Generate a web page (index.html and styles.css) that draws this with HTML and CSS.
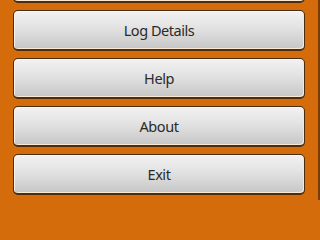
FILE: index.html
```html
<!DOCTYPE html>
<html>
<head>
<meta charset="utf-8">
<link rel="stylesheet" href="styles.css">
</head>
<body>
<div class="screen">
  <div class="menu">
    <button class="btn" aria-hidden="true"></button>
    <button class="btn">Log Details</button>
    <button class="btn">Help</button>
    <button class="btn">About</button>
    <button class="btn">Exit</button>
  </div>
</div>
</body>
</html>
```
FILE: styles.css
```css
html, body {
  margin: 0;
  padding: 0;
  width: 320px;
  height: 200px;
  overflow: hidden;
  background: #d56c0c;
}
.screen {
  width: 320px;
  height: 200px;
  box-sizing: border-box;
  border-right: 2px solid #7a3c06;
  overflow: hidden;
}
.menu {
  display: flex;
  flex-direction: column;
  gap: 7px;
  margin-top: -38px;
  padding: 0 13px 0 13px;
}
.btn {
  height: 41px;
  width: 292px;
  box-sizing: border-box;
  border: 1px solid #4a2c10;
  border-bottom-width: 2px;
  border-radius: 5px;
  background: linear-gradient(to bottom, #f2f2f2 0%, #e2e2e2 45%, #c6c6c6 100%);
  box-shadow: inset 1px 1px 0 #fff8ec, inset -1px -1px 0 #fbe8d2;
  font-family: "Noto Sans", "Open Sans", sans-serif;
  font-size: 14.5px;
  letter-spacing: -0.45px;
  color: #2a2a2a;
  padding: 0;
  text-align: center;
}
```
